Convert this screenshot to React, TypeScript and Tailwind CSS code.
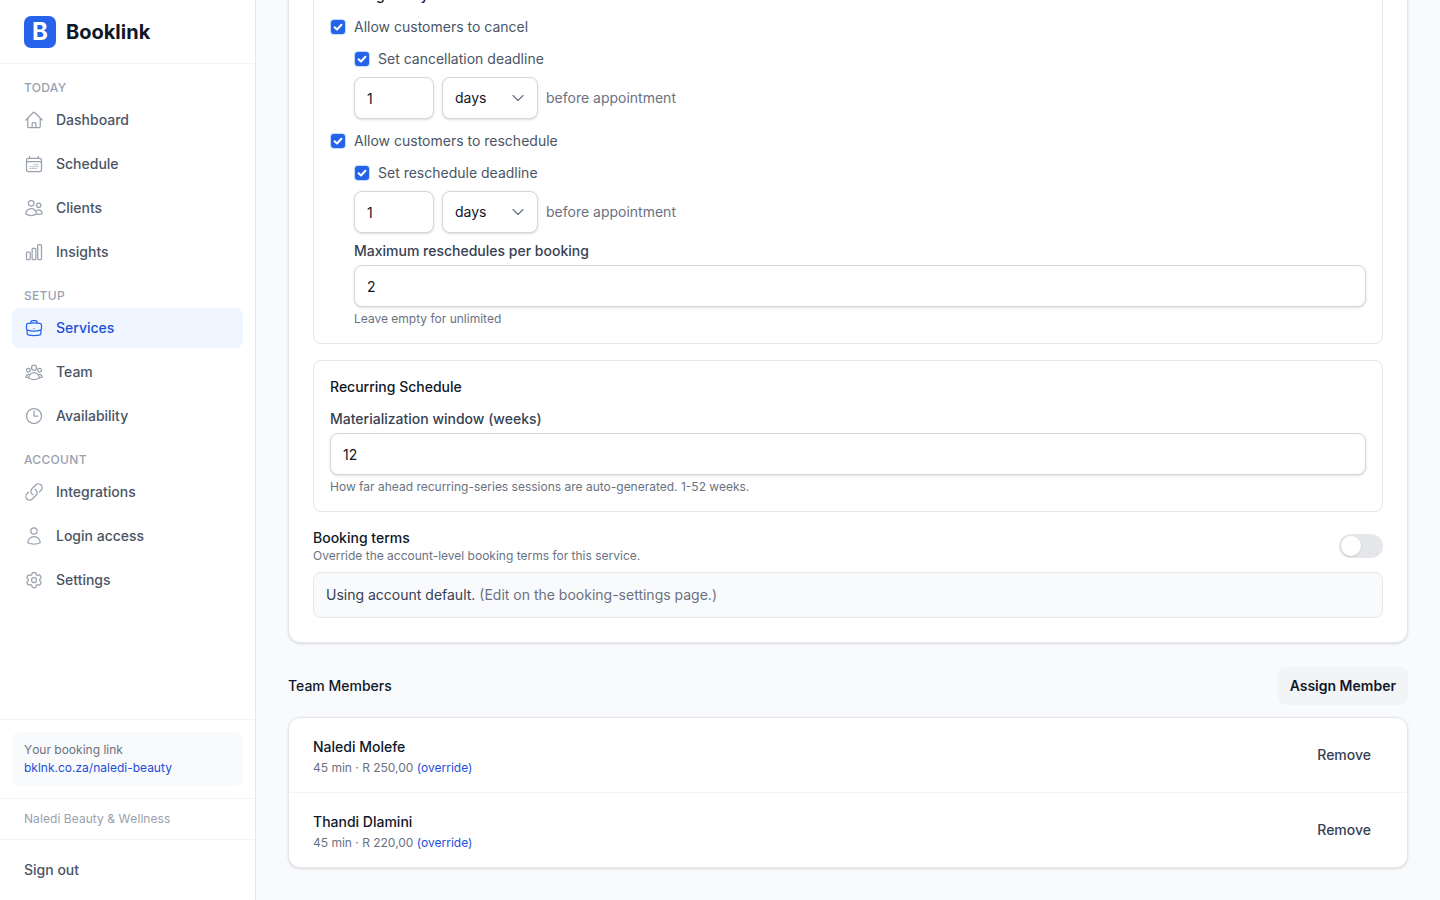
import React from "react";
import {
  HiOutlineHome,
  HiOutlineCalendarDays,
  HiOutlineUsers,
  HiOutlineChartBar,
  HiOutlineBriefcase,
  HiOutlineUserGroup,
  HiOutlineClock,
  HiOutlineLink,
  HiOutlineUser,
  HiOutlineCog6Tooth,
  HiOutlineChevronDown,
} from "react-icons/hi2";

type NavItem = { label: string; icon: React.ComponentType<{ className?: string }>; active?: boolean };

const sections: { title: string; items: NavItem[] }[] = [
  {
    title: "Today",
    items: [
      { label: "Dashboard", icon: HiOutlineHome },
      { label: "Schedule", icon: HiOutlineCalendarDays },
      { label: "Clients", icon: HiOutlineUsers },
      { label: "Insights", icon: HiOutlineChartBar },
    ],
  },
  {
    title: "Setup",
    items: [
      { label: "Services", icon: HiOutlineBriefcase, active: true },
      { label: "Team", icon: HiOutlineUserGroup },
      { label: "Availability", icon: HiOutlineClock },
    ],
  },
  {
    title: "Account",
    items: [
      { label: "Integrations", icon: HiOutlineLink },
      { label: "Login access", icon: HiOutlineUser },
      { label: "Settings", icon: HiOutlineCog6Tooth },
    ],
  },
];

function Check({ label }: { label: string }) {
  return (
    <label className="flex items-center gap-2 h-5">
      <span className="w-3.5 h-3.5 mx-px rounded-[3px] bg-[#2563eb] shadow-[0_0_0_1px_#bfdbfe] flex items-center justify-center shrink-0">
        <svg viewBox="0 0 14 14" className="w-3.5 h-3.5" fill="none" stroke="white" strokeWidth="2" strokeLinecap="round" strokeLinejoin="round">
          <path d="M3.6 7.3 6 9.5 10.4 4.7" />
        </svg>
      </span>
      <span className="text-sm text-gray-600">{label}</span>
    </label>
  );
}

function TextInput({ value, className = "" }: { value: string; className?: string }) {
  return (
    <input
      readOnly
      defaultValue={value}
      className={"h-[42px] px-3 text-sm text-gray-900 bg-white border border-gray-300 rounded-lg shadow-sm outline-none " + className}
    />
  );
}

function Deadline() {
  return (
    <div className="flex items-center gap-2">
      <TextInput value="1" className="w-20" />
      <div className="w-24 h-[42px] px-3 text-sm text-gray-900 bg-white border border-gray-300 rounded-lg shadow-sm flex items-center justify-between">
        <span>days</span>
        <HiOutlineChevronDown className="w-4 h-4 text-gray-500 -mr-px [&_path]:[stroke-width:1.75]" />
      </div>
      <span className="text-sm text-gray-500">before appointment</span>
    </div>
  );
}

export default function App() {
  return (
    <div className="flex h-screen overflow-hidden bg-gray-50 [font-family:Inter,sans-serif]">
      <aside className="w-64 shrink-0 h-full bg-white border-r border-gray-200 flex flex-col">
        <div className="h-16 shrink-0 px-6 flex items-center gap-2.5 border-b border-gray-100">
          <div className="w-8 h-8 rounded-[7px] bg-[#2563eb] flex items-center justify-center text-white text-2xl font-bold">B</div>
          <span className="text-xl font-bold text-gray-900">Booklink</span>
        </div>
        <nav className="flex-1 px-3 pt-4 flex flex-col gap-4">
          {sections.map((s) => (
            <div key={s.title}>
              <div className="px-3 mb-1 text-xs font-medium uppercase tracking-wide text-gray-400">{s.title}</div>
              <div className="flex flex-col gap-1">
                {s.items.map((item) => {
                  const Icon = item.icon;
                  return (
                    <a
                      key={item.label}
                      className={
                        "h-10 px-3 rounded-lg flex items-center gap-3 text-sm font-medium " +
                        (item.active ? "bg-blue-50 text-[#1d4ed8]" : "text-gray-600")
                      }
                    >
                      <Icon className={"w-5 h-5 " + (item.active ? "text-[#2563eb]" : "text-gray-400")} />
                      {item.label}
                    </a>
                  );
                })}
              </div>
            </div>
          ))}
        </nav>
        <div className="p-3 border-t border-gray-100">
          <div className="px-3 py-2.5 rounded-lg bg-gray-50 text-xs">
            <div className="text-gray-500 [font-kerning:none]">Your booking link</div>
            <div className="mt-0.5 text-[#1d4ed8]">bklnk.co.za/naledi-beauty</div>
          </div>
        </div>
        <div className="px-6 py-3 border-t border-gray-100 text-xs text-gray-400 [font-kerning:none] tracking-[0.08px]">Naledi Beauty &amp; Wellness</div>
        <div className="h-[61px] px-6 border-t border-gray-100 flex items-center text-sm font-medium text-gray-600">Sign out</div>
      </aside>

      <main className="flex-1 min-w-0 h-full overflow-hidden px-8">
        <div className="-mt-[57px] p-6 bg-white border border-gray-200 rounded-xl shadow-sm">
          <div className="p-4 border border-gray-200 rounded-lg flex flex-col gap-3">
            <div className="text-sm font-medium text-gray-900 h-5">Booking Policy</div>
            <Check label="Allow customers to cancel" />
            <div className="pl-6 flex flex-col gap-2">
              <Check label="Set cancellation deadline" />
              <Deadline />
            </div>
            <Check label="Allow customers to reschedule" />
            <div className="pl-6 flex flex-col gap-2">
              <Check label="Set reschedule deadline" />
              <Deadline />
              <div>
                <div className="text-sm font-medium text-gray-700 mb-1">Maximum reschedules per booking</div>
                <TextInput value="2" className="w-full block" />
                <div className="mt-1 text-xs text-gray-500">Leave empty for unlimited</div>
              </div>
            </div>
          </div>

          <div className="mt-4 p-4 border border-gray-200 rounded-lg">
            <div className="text-sm font-medium text-gray-900">Recurring Schedule</div>
            <div className="mt-3 text-sm font-medium text-gray-700 mb-1">Materialization window (weeks)</div>
            <TextInput value="12" className="w-full block" />
            <div className="mt-1 text-xs text-gray-500">How far ahead recurring-series sessions are auto-generated. 1-52 weeks.</div>
          </div>

          <div className="mt-4 flex items-center justify-between">
            <div>
              <div className="text-sm font-medium text-gray-900">Booking terms</div>
              <div className="text-xs text-gray-500">Override the account-level booking terms for this service.</div>
            </div>
            <div className="w-11 h-6 rounded-full bg-gray-200 p-0.5">
              <div className="w-5 h-5 rounded-full bg-white shadow" />
            </div>
          </div>
          <div className="mt-2 px-3 py-3 bg-gray-50 border border-gray-200 rounded-lg text-sm text-gray-500">
            <span className="text-gray-700">Using account default.</span> (Edit on the booking-settings page.)
          </div>
        </div>

        <div className="mt-6 mb-3 flex items-center justify-between">
          <h2 className="text-sm font-medium text-gray-900">Team Members</h2>
          <button className="h-[38px] px-3 rounded-lg bg-gray-100 text-sm font-semibold text-gray-900">Assign Member</button>
        </div>
        <div className="bg-white border border-gray-200 rounded-xl shadow-sm divide-y divide-gray-100">
          {[
            { name: "Naledi Molefe", meta: "45 min · R 250,00" },
            { name: "Thandi Dlamini", meta: "45 min · R 220,00" },
          ].map((m) => (
            <div key={m.name} className="h-[75px] last:h-[74px] px-6 flex items-center justify-between">
              <div className="pt-px">
                <div className="text-sm leading-6 font-medium text-gray-900">{m.name}</div>
                <div className="mt-px text-xs text-gray-500">
                  {m.meta} <span className="text-[#1d4ed8]">(override)</span>
                </div>
              </div>
              <button className="px-3 py-2 text-sm font-medium text-gray-700">Remove</button>
            </div>
          ))}
        </div>
      </main>
    </div>
  );
}
